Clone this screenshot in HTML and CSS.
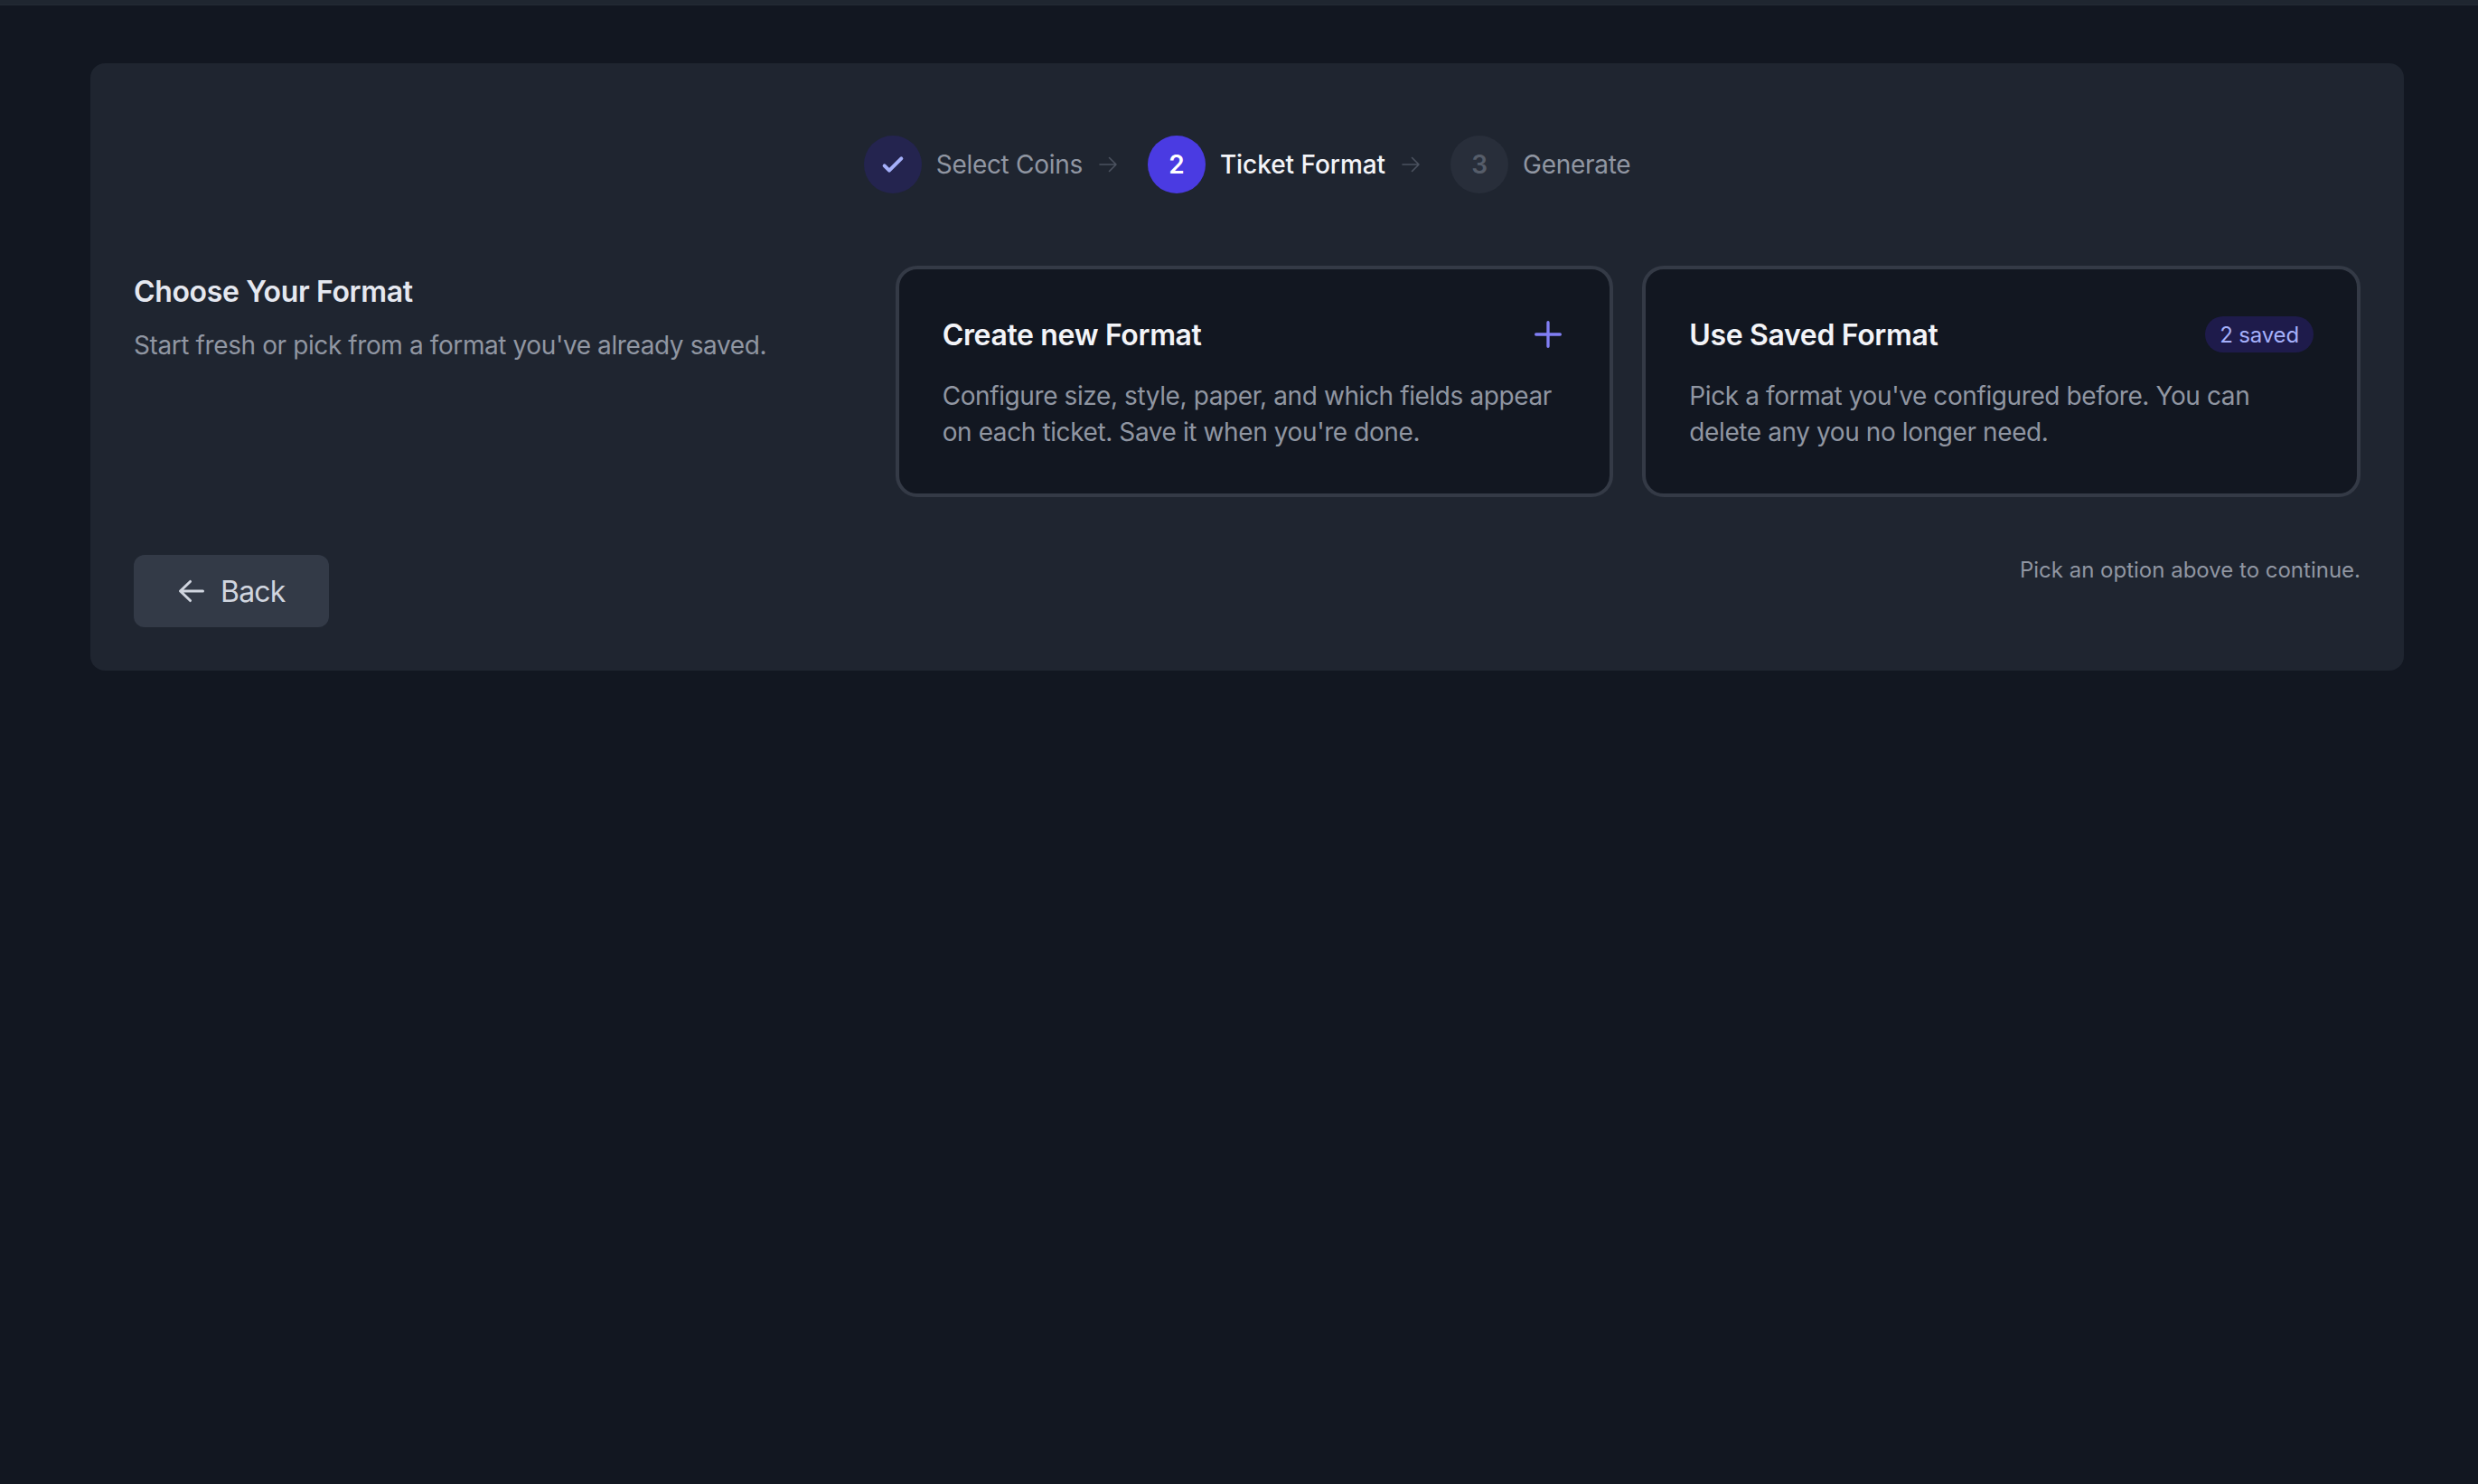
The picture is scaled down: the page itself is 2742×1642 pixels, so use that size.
FILE: index.html
```html
<!DOCTYPE html>
<html lang="en">
<head>
    <meta charset="UTF-8">
    <meta name="viewport" content="width=device-width, initial-scale=1.0">
    <title>Ticket Format</title>
    <link rel="stylesheet" href="styles.css">
</head>
<body>
    <header class="topbar"></header>
    <main class="card">
        <div class="steps">
            <div class="step done">
                <span class="step-circle">
                    <svg class="icon-check" viewBox="0 0 24 24"><path d="M5 13l4 4L19 7"/></svg>
                </span>
                <span class="step-label">Select Coins</span>
                <svg class="icon-next" viewBox="0 0 24 24"><path d="M13.5 4.5L21 12m0 0l-7.5 7.5M21 12H3"/></svg>
            </div>
            <div class="step active">
                <span class="step-circle">2</span>
                <span class="step-label">Ticket Format</span>
                <svg class="icon-next" viewBox="0 0 24 24"><path d="M13.5 4.5L21 12m0 0l-7.5 7.5M21 12H3"/></svg>
            </div>
            <div class="step">
                <span class="step-circle">3</span>
                <span class="step-label">Generate</span>
            </div>
        </div>

        <div class="format">
            <div class="intro">
                <h2>Choose Your Format</h2>
                <p>Start fresh or pick from a format you've already saved.</p>
            </div>
            <div class="options">
                <div class="option">
                    <div class="option-head">
                        <h3>Create new Format</h3>
                        <svg class="icon-plus" viewBox="0 0 24 24"><path d="M12 4v16m8-8H4"/></svg>
                    </div>
                    <p>Configure size, style, paper, and which fields appear on each ticket. Save it when you're done.</p>
                </div>
                <div class="option">
                    <div class="option-head">
                        <h3>Use Saved Format</h3>
                        <span class="badge">2 saved</span>
                    </div>
                    <p>Pick a format you've configured before. You can delete any you no longer need.</p>
                </div>
            </div>
        </div>

        <div class="actions">
            <button class="back">
                <svg class="icon-back" viewBox="0 0 20 20" fill="currentColor"><path fill-rule="evenodd" clip-rule="evenodd" d="M17 10a.75.75 0 01-.75.75H5.612l4.158 3.96a.75.75 0 11-1.04 1.08l-5.5-5.25a.75.75 0 010-1.08l5.5-5.25a.75.75 0 111.04 1.08L5.612 9.25H16.25A.75.75 0 0117 10z"/></svg>
                <span>Back</span>
            </button>
            <span class="hint">Pick an option above to continue.</span>
        </div>
    </main>
</body>
</html>
```
FILE: styles.css
```css
* {
    box-sizing: border-box;
}
body {
    font-family: Inter, sans-serif;
    font-size: 28px;
    line-height: 40px;
    letter-spacing: -0.4px;
    background-color: #121721;
    color: #9096a2;
    margin: 0;
    min-height: 100vh;
}
h2, h3, p {
    margin: 0;
}
.topbar {
    height: 6px;
    background: #1f2630;
    border-bottom: 1px solid #242a35;
}
.card {
    margin: 64px 82px 0 100px;
    padding: 80px 48px 48px;
    background: #1f2530;
    border-radius: 16px;
}
.steps {
    display: flex;
    justify-content: center;
    gap: 32px;
}
.step {
    display: flex;
    align-items: center;
    gap: 16px;
    letter-spacing: -0.3px;
}
.step-circle {
    display: flex;
    align-items: center;
    justify-content: center;
    width: 64px;
    height: 64px;
    border-radius: 50%;
    background: #282e3a;
    color: #565d6a;
    font-weight: 600;
}
.done .step-circle {
    background: #24244f;
    color: #a5b0fa;
}
.active .step-circle {
    background: #4a3be2;
    color: #fff;
}
.active .step-label {
    color: #f3f4f8;
    font-weight: 500;
    letter-spacing: -0.05px;
}
.icon-check {
    width: 32px;
    height: 32px;
    fill: none;
    stroke: currentColor;
    stroke-width: 3;
    stroke-linecap: round;
    stroke-linejoin: round;
}
.icon-next {
    width: 24px;
    height: 24px;
    fill: none;
    stroke: #4b525f;
    stroke-width: 1.6;
    stroke-linecap: round;
    stroke-linejoin: round;
}
.format {
    display: grid;
    grid-template-columns: repeat(3, 1fr);
    gap: 64px;
    margin-top: 80px;
}
.intro {
    padding-top: 5px;
}
.intro h2, .option h3 {
    font-size: 32px;
    line-height: 48px;
    font-weight: 600;
    letter-spacing: -0.35px;
    color: #e5e8f0;
}
.intro p {
    margin-top: 15px;
}
.options {
    display: grid;
    grid-column: span 2;
    grid-template-columns: 1fr 1fr;
    gap: 32px;
}
.option {
    padding: 48px;
    border: 4px solid #343a46;
    border-radius: 24px;
    background: #121721;
}
.option-head {
    display: flex;
    align-items: center;
    justify-content: space-between;
    height: 48px;
    margin-bottom: 24px;
}
.option h3 {
    padding-top: 2px;
    color: #f3f4f8;
}
.icon-plus {
    width: 40px;
    height: 40px;
    fill: none;
    stroke: #817ff5;
    stroke-width: 2;
    stroke-linecap: round;
}
.badge {
    padding: 5px 16px 3px;
    border-radius: 20px;
    background: #1e1b4b;
    color: #a5b0fa;
    font-size: 24px;
    line-height: 32px;
    letter-spacing: -0.15px;
}
.actions {
    display: flex;
    align-items: flex-start;
    justify-content: space-between;
    margin-top: 64px;
}
.back {
    display: flex;
    align-items: center;
    gap: 12px;
    height: 80px;
    padding: 0 48px 0 44px;
    border: none;
    border-radius: 12px;
    background: #333a47;
    color: #d0d5df;
    font-family: inherit;
    font-size: 32px;
    letter-spacing: -0.8px;
}
.icon-back {
    width: 40px;
    height: 40px;
}
.hint {
    padding-top: 1px;
    font-size: 24px;
    line-height: 32px;
}
.actions .hint {
    letter-spacing: 0;
}
```
